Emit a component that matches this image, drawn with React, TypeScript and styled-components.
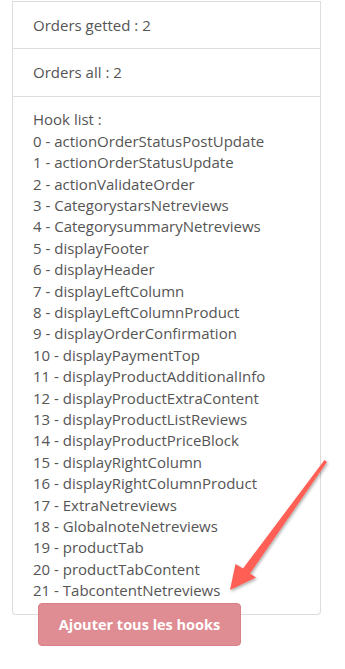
import styled, {createGlobalStyle} from 'styled-components';

const hooks = [
    'actionOrderStatusPostUpdate',
    'actionOrderStatusUpdate',
    'actionValidateOrder',
    'CategorystarsNetreviews',
    'CategorysummaryNetreviews',
    'displayFooter',
    'displayHeader',
    'displayLeftColumn',
    'displayLeftColumnProduct',
    'displayOrderConfirmation',
    'displayPaymentTop',
    'displayProductAdditionalInfo',
    'displayProductExtraContent',
    'displayProductListReviews',
    'displayProductPriceBlock',
    'displayRightColumn',
    'displayRightColumnProduct',
    'ExtraNetreviews',
    'GlobalnoteNetreviews',
    'productTab',
    'productTabContent',
    'TabcontentNetreviews',
];

export default function App() {
    return (
        <Page>
            <GlobalStyle/>
            <Panel>
                <Item>Orders getted : 2</Item>
                <Item>Orders all : 2</Item>
                <Item>
                    <div>Hook list :</div>
                    {hooks.map((hook, i) => <div key={hook}>{i} - {hook}</div>)}
                </Item>
            </Panel>
            <AddButton type="button">Ajouter tous les hooks</AddButton>

            {/* annotation arrow drawn over the screenshot */}
            <Arrow width="345" height="669" viewBox="0 0 345 669">
                <defs>
                    <filter id="shadow" x="-20%" y="-20%" width="140%" height="140%">
                        <feDropShadow dx="1" dy="1.5" stdDeviation="1.5" floodColor="#000" floodOpacity="0.35"/>
                    </filter>
                </defs>
                <polygon
                    points="230,590 235.5,564 243,568.5 324.5,460 327,462 250,573.5 256,577.5"
                    fill="#ff5e55"
                    filter="url(#shadow)"
                />
            </Arrow>
        </Page>
    );
}


const GlobalStyle = createGlobalStyle`
  body {
    margin: 0;
    background: #fff;
    font-family: "Open Sans", "Liberation Sans", sans-serif;
    color: #555;
  }
`;

const Page = styled.div`
  position: relative;
  width: 345px;
  height: 669px;
  padding-top: 1px;
  box-sizing: border-box;
  overflow: hidden;
`;

const Panel = styled.div`
  width: 309px;
  margin-left: 12px;
  border: 1px solid #ddd;
  border-top: none;
  border-radius: 0 0 4px 4px;
  box-sizing: border-box;
`;

const Item = styled.div`
  border-top: 1px solid #ddd;
  padding: 12.5px 20px;
  font-size: 15px;
  line-height: 21.4px;
  color: #555;
`;

const AddButton = styled.button`
  position: relative;
  display: block;
  margin: -12px 0 0 38px;
  width: 203px;
  height: 43px;
  border: 1px solid #d97f87;
  border-radius: 4px;
  background-color: #e08c93;
  color: #fff;
  font-family: "Open Sans", "Liberation Sans", sans-serif;
  font-size: 14.5px;
  font-weight: 700;
  padding: 0;
`;

const Arrow = styled.svg`
  position: absolute;
  top: 0;
  left: 0;
  pointer-events: none;
`;
